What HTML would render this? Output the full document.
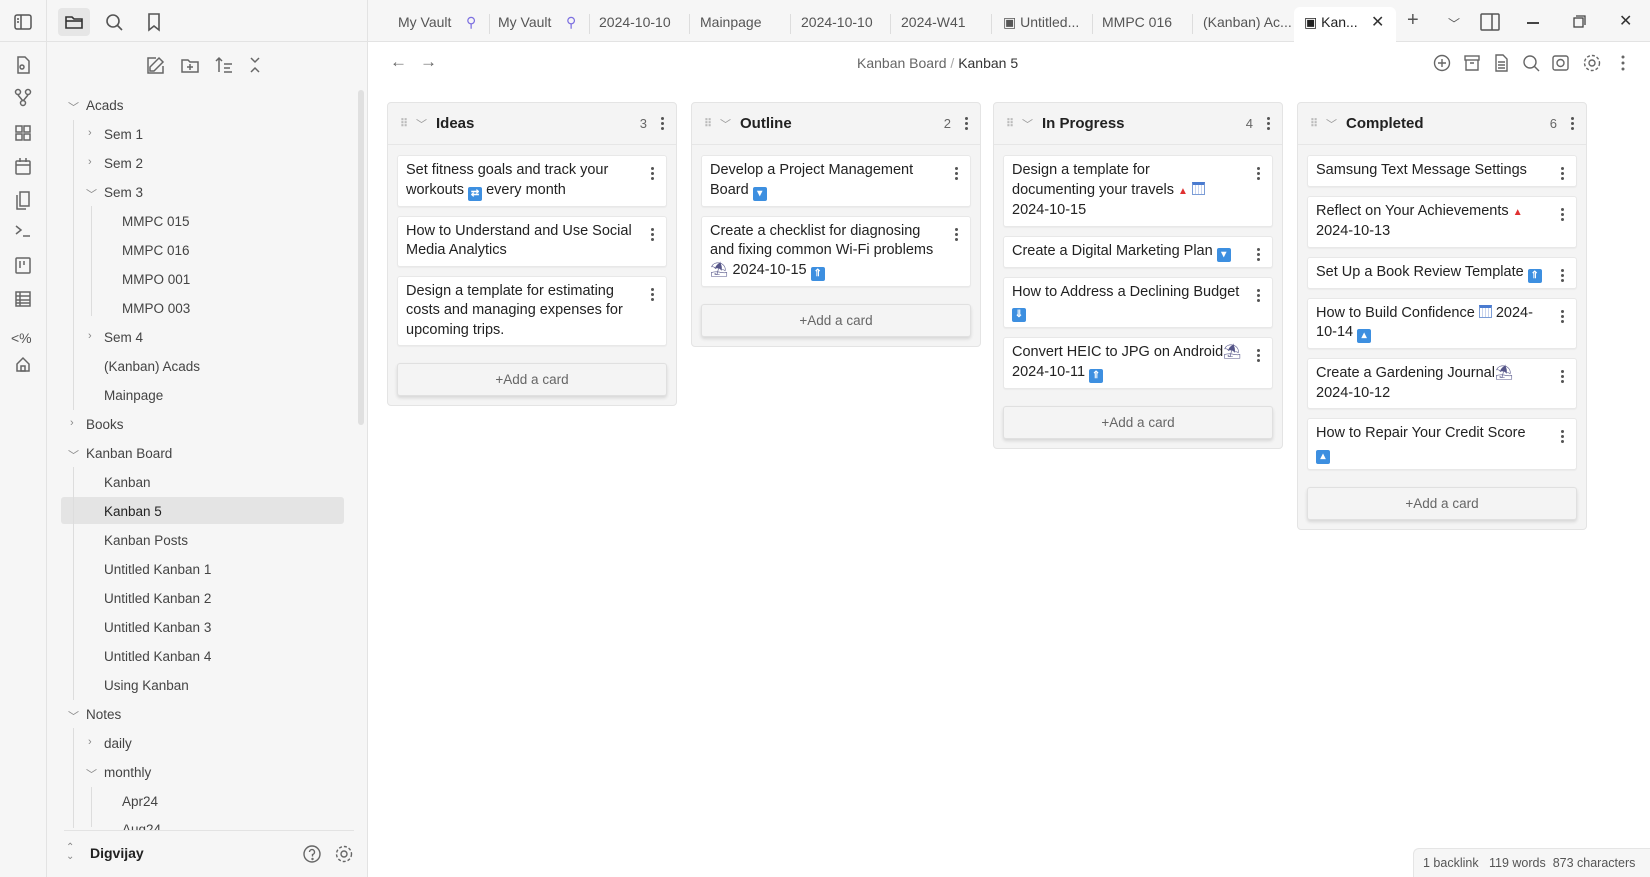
<!DOCTYPE html>
<html><head><meta charset="utf-8"><style>
*{box-sizing:border-box;margin:0;padding:0}
body{width:1650px;height:877px;overflow:hidden;font-family:"Liberation Sans",sans-serif;color:#222;background:#fff;position:relative}
.abs{position:absolute}
#ribbon{left:0;top:0;width:47px;height:877px;background:#f6f6f6;border-right:1px solid #e3e3e3}
#side{left:47px;top:0;width:321px;height:877px;background:#f6f6f6;border-right:1px solid #e3e3e3}
#topbar{left:368px;top:0;width:1282px;height:42px;background:#f6f6f6;border-bottom:1px solid #e3e3e3}
.sidetop{left:0;top:0;width:368px;height:42px;border-bottom:1px solid #e3e3e3}
.tab{position:absolute;top:14px;font-size:14px;color:#555;white-space:nowrap}
.sep{position:absolute;top:14px;width:1px;height:20px;background:#ddd}
.tree{position:absolute;font-size:13.5px;color:#444;white-space:nowrap}
.chev{position:absolute;font-size:11px;color:#888}
.col{position:absolute;top:102px;width:290px;background:#f4f4f4;border:1px solid #e4e4e4;border-radius:4px;padding:0 9px 9px}
.hd{height:42px;display:flex;align-items:center;font-size:15px;font-weight:bold;color:#222;border-bottom:1px solid #e6e6e6;margin:0 -9px 10px;padding:0 12px}
.hd .drag{color:#bbb;font-size:11px;width:16px}
.hd .cv{color:#999;font-size:11px;width:20px;font-weight:normal}
.hd .n{margin-left:auto;font-weight:normal;color:#666;font-size:13px;margin-right:14px}
.dots{width:3px;display:flex;flex-direction:column;gap:2px}
.dots i{width:3px;height:3px;background:#555;border-radius:50%;display:block}
.card{background:#fff;border:1px solid #e8e8e8;border-radius:3px;margin-bottom:9px;padding:5px 30px 5px 8px;font-size:14.5px;line-height:19.5px;position:relative;box-shadow:0 1px 1px rgba(0,0,0,.04)}
.card .dots{position:absolute;right:12px;top:11px}
.add{height:33px;margin-top:17px;background:#f4f4f4;border:1px solid #e0e0e0;border-radius:3px;box-shadow:0 2px 3px rgba(0,0,0,.12);text-align:center;line-height:31px;font-size:13.5px;color:#666}
.ic{display:inline-block;width:14px;height:14px;background:#3d8fe0;border-radius:2px;color:#fff;font-size:10px;line-height:14px;text-align:center;vertical-align:-2px;font-weight:bold}
.tri{color:#e03131;font-size:10px}
.cal{display:inline-block;width:13px;height:13px;border:1px solid #7a9cd6;border-top:3px solid #4a7bd0;vertical-align:-1px;background:repeating-linear-gradient(90deg,#fff 0 2px,#c8d4ee 2px 3px)}
</style></head><body>
<div id="ribbon" class="abs"></div>
<div id="side" class="abs"></div>
<div class="abs sidetop"></div>
<div id="topbar" class="abs"></div>

<svg class="abs" style="left:13px;top:12px" width="20" height="20" viewBox="0 0 20 20" fill="none" stroke="#555" stroke-width="1.5"><rect x="2" y="3" width="16" height="14" rx="2"/><line x1="8" y1="3" x2="8" y2="17"/><line x1="4" y1="7" x2="6" y2="7"/><line x1="4" y1="10" x2="6" y2="10"/></svg>
<div class="abs" style="left:58px;top:8px;width:32px;height:28px;background:#e6e6e6;border-radius:4px"></div>
<svg class="abs" style="left:64px;top:12px" width="20" height="20" viewBox="0 0 20 20" fill="none" stroke="#333" stroke-width="1.6"><path d="M2 5h6l2 2h8v9H2z"/><line x1="2" y1="9" x2="18" y2="9"/></svg>
<svg class="abs" style="left:104px;top:12px" width="20" height="20" viewBox="0 0 20 20" fill="none" stroke="#555" stroke-width="1.6"><circle cx="9" cy="9" r="6"/><line x1="13.5" y1="13.5" x2="18" y2="18"/></svg>
<svg class="abs" style="left:144px;top:12px" width="20" height="20" viewBox="0 0 20 20" fill="none" stroke="#555" stroke-width="1.6"><path d="M5 2h10v16l-5-4-5 4z"/></svg>

<svg class="abs" style="left:13px;top:55px" width="20" height="330" viewBox="0 0 20 330" fill="none" stroke="#666" stroke-width="1.5">
<path d="M5 2h7l4 4v12H5z"/><circle cx="9" cy="12" r="2"/>
<circle cx="5" cy="37" r="2.5"/><circle cx="15" cy="37" r="2.5"/><circle cx="10" cy="48" r="2.5"/><path d="M5 40l5 6M15 40l-5 6"/>
<rect x="3" y="71" width="6" height="6"/><rect x="11" y="71" width="6" height="6"/><rect x="3" y="79" width="6" height="6"/><rect x="11" y="79" width="6" height="6"/>
<rect x="3" y="106" width="14" height="13" rx="1"/><line x1="3" y1="110" x2="17" y2="110"/><line x1="7" y1="103" x2="7" y2="107"/><line x1="13" y1="103" x2="13" y2="107"/>
<path d="M7 137h9v14H7z"/><path d="M4 140v14h9"/>
<path d="M3 171l5 4-5 4"/><line x1="10" y1="181" x2="17" y2="181"/>
<rect x="3" y="203" width="14" height="15" rx="1"/><line x1="7" y1="206" x2="7" y2="213"/><line x1="11" y1="206" x2="11" y2="210"/>
<rect x="3" y="237" width="14" height="14"/><line x1="3" y1="241" x2="17" y2="241"/><line x1="3" y1="245" x2="17" y2="245"/><line x1="3" y1="248" x2="17" y2="248"/><line x1="7" y1="237" x2="7" y2="251"/>
<path d="M4 309l6-6 6 6v7H4z"/><rect x="8" y="311" width="4" height="5"/>
</svg>
<div class="abs" style="left:11px;top:330px;font-size:14px;color:#555">&lt;%</div>

<svg class="abs" style="left:146px;top:55px" width="120" height="20" viewBox="0 0 120 20" fill="none" stroke="#666" stroke-width="1.5">
<path d="M13 3l4 4-9 9H4v-4z"/><path d="M10 3H2v15h15v-7"/>
<path d="M36 5h6l2 2h8v10H36z"/><line x1="44" y1="9" x2="44" y2="15"/><line x1="41" y1="12" x2="47" y2="12"/>
<path d="M73 3v14M70 6l3-3 3 3"/><line x1="78" y1="9" x2="86" y2="9"/><line x1="78" y1="13" x2="84" y2="13"/><line x1="78" y1="17" x2="86" y2="17"/>
<path d="M105 3l4 4 4-4M105 17l4-4 4 4"/>
</svg>

<div class="abs" style="left:61px;top:497px;width:283px;height:27px;background:#e4e4e4;border-radius:3px"></div>
<div class="abs" style="left:73px;top:120px;width:1px;height:290px;background:#ddd"></div>
<div class="abs" style="left:91px;top:206px;width:1px;height:110px;background:#ddd"></div>
<div class="abs" style="left:73px;top:467px;width:1px;height:233px;background:#ddd"></div>
<div class="abs" style="left:73px;top:728px;width:1px;height:100px;background:#ddd"></div>
<div class="abs" style="left:91px;top:787px;width:1px;height:40px;background:#ddd"></div>
<span class="chev" style="left:68px;top:99px">﹀</span><div class="tree" style="left:86px;top:98px">Acads</div>
<span class="chev" style="left:88px;top:127px">›</span><div class="tree" style="left:104px;top:127px">Sem 1</div>
<span class="chev" style="left:88px;top:156px">›</span><div class="tree" style="left:104px;top:156px">Sem 2</div>
<span class="chev" style="left:86px;top:186px">﹀</span><div class="tree" style="left:104px;top:185px">Sem 3</div>
<div class="tree" style="left:122px;top:214px">MMPC 015</div>
<div class="tree" style="left:122px;top:243px">MMPC 016</div>
<div class="tree" style="left:122px;top:272px">MMPO 001</div>
<div class="tree" style="left:122px;top:301px">MMPO 003</div>
<span class="chev" style="left:88px;top:330px">›</span><div class="tree" style="left:104px;top:330px">Sem 4</div>
<div class="tree" style="left:104px;top:359px">(Kanban) Acads</div>
<div class="tree" style="left:104px;top:388px">Mainpage</div>
<span class="chev" style="left:70px;top:417px">›</span><div class="tree" style="left:86px;top:417px">Books</div>
<span class="chev" style="left:68px;top:447px">﹀</span><div class="tree" style="left:86px;top:446px">Kanban Board</div>
<div class="tree" style="left:104px;top:475px">Kanban</div>
<div class="tree" style="left:104px;top:504px;color:#222">Kanban 5</div>
<div class="tree" style="left:104px;top:533px">Kanban Posts</div>
<div class="tree" style="left:104px;top:562px">Untitled Kanban 1</div>
<div class="tree" style="left:104px;top:591px">Untitled Kanban 2</div>
<div class="tree" style="left:104px;top:620px">Untitled Kanban 3</div>
<div class="tree" style="left:104px;top:649px">Untitled Kanban 4</div>
<div class="tree" style="left:104px;top:678px">Using Kanban</div>
<span class="chev" style="left:68px;top:708px">﹀</span><div class="tree" style="left:86px;top:707px">Notes</div>
<span class="chev" style="left:88px;top:736px">›</span><div class="tree" style="left:104px;top:736px">daily</div>
<span class="chev" style="left:86px;top:766px">﹀</span><div class="tree" style="left:104px;top:765px">monthly</div>
<div class="tree" style="left:122px;top:794px">Apr24</div>
<div class="tree" style="left:122px;top:822px;height:8px;overflow:hidden">Aug24</div>
<div class="abs" style="left:64px;top:830px;width:290px;height:47px;background:#f6f6f6;border-top:1px solid #e3e3e3"></div>
<div class="abs" style="left:66px;top:843px;font-size:10px;color:#888;line-height:9px">⌃<br>⌄</div>
<div class="abs" style="left:90px;top:845px;font-size:14px;font-weight:bold;color:#222">Digvijay</div>
<svg class="abs" style="left:302px;top:844px" width="52" height="20" viewBox="0 0 52 20" fill="none" stroke="#666" stroke-width="1.4"><circle cx="10" cy="10" r="8"/><path d="M7.5 8a2.5 2.5 0 1 1 3 2.5v2"/><circle cx="10.5" cy="15" r=".5"/><circle cx="42" cy="10" r="3"/><circle cx="42" cy="10" r="7.5" stroke-dasharray="3 2"/></svg>
<div class="abs" style="left:358px;top:90px;width:6px;height:335px;background:#e0e0e0;border-radius:3px"></div>

<div class="tab" style="left:398px">My Vault</div><span class="tab" style="left:466px;color:#7c6fe0">⚲</span>
<div class="sep" style="left:489px"></div>
<div class="tab" style="left:498px">My Vault</div><span class="tab" style="left:566px;color:#7c6fe0">⚲</span>
<div class="sep" style="left:589px"></div>
<div class="tab" style="left:599px">2024-10-10</div>
<div class="sep" style="left:689px"></div>
<div class="tab" style="left:700px">Mainpage</div>
<div class="sep" style="left:790px"></div>
<div class="tab" style="left:801px">2024-10-10</div>
<div class="sep" style="left:890px"></div>
<div class="tab" style="left:901px">2024-W41</div>
<div class="sep" style="left:991px"></div>
<div class="tab" style="left:1003px">▣ Untitled...</div>
<div class="sep" style="left:1092px"></div>
<div class="tab" style="left:1102px">MMPC 016</div>
<div class="sep" style="left:1192px"></div>
<div class="tab" style="left:1203px">(Kanban) Ac...</div>
<div class="abs" style="left:1294px;top:7px;width:102px;height:36px;background:#fff;border-radius:6px 6px 0 0"></div>
<div class="tab" style="left:1304px;color:#222">▣ Kan...</div>
<div class="tab" style="left:1371px;color:#333;font-size:16px;top:12px">✕</div>
<div class="tab" style="left:1407px;font-size:20px;top:9px">+</div>
<div class="tab" style="left:1448px;font-size:12px;top:15px">﹀</div>
<svg class="abs" style="left:1480px;top:13px" width="20" height="18" viewBox="0 0 20 18" fill="none" stroke="#555" stroke-width="1.5"><rect x="1" y="1" width="18" height="16" rx="1"/><line x1="12" y1="1" x2="12" y2="17"/></svg>
<div class="abs" style="left:1527px;top:22px;width:12px;height:1.5px;background:#444"></div>
<svg class="abs" style="left:1573px;top:15px" width="13" height="13" viewBox="0 0 13 13" fill="none" stroke="#444" stroke-width="1.3"><rect x="1" y="3" width="9" height="9"/><path d="M3 1h9v9"/></svg>
<div class="tab" style="left:1619px;color:#333;font-size:16px;top:11px">✕</div>

<div class="abs" style="left:390px;top:52px;font-size:17px;color:#666">←</div>
<div class="abs" style="left:420px;top:52px;font-size:17px;color:#666">→</div>
<div class="abs" style="left:857px;top:55px;font-size:14px;color:#666">Kanban Board <span style="color:#aaa">/</span> <span style="color:#333">Kanban 5</span></div>
<svg class="abs" style="left:1433px;top:53px" width="200" height="20" viewBox="0 0 200 20" fill="none" stroke="#666" stroke-width="1.4">
<circle cx="9" cy="10" r="7.5"/><path d="M9 6v8M5 10h8"/>
<rect x="32" y="3" width="14" height="4"/><path d="M33 7v10h12V7M37 10h4"/>
<path d="M63 2h7l4 4v12H63z"/><path d="M65 9h7M65 12h7M65 15h7"/>
<circle cx="97" cy="9" r="6"/><path d="M101 13l5 5"/>
<rect x="120" y="3" width="15" height="14" rx="2"/><circle cx="127.5" cy="10" r="3.5"/>
<circle cx="159" cy="10" r="3"/><circle cx="159" cy="10" r="7.5" stroke-dasharray="3 2"/>
<circle cx="190" cy="4" r=".8" fill="#666"/><circle cx="190" cy="10" r=".8" fill="#666"/><circle cx="190" cy="16" r=".8" fill="#666"/>
</svg>

<div class="col" style="left:387px">
 <div class="hd"><span class="drag">⠿</span><span class="cv">﹀</span>Ideas<span class="n">3</span><span class="dots"><i></i><i></i><i></i></span></div>
 <div class="card">Set fitness goals and track your workouts <span class="ic">⇄</span> every month<span class="dots"><i></i><i></i><i></i></span></div>
 <div class="card">How to Understand and Use Social Media Analytics<span class="dots"><i></i><i></i><i></i></span></div>
 <div class="card">Design a template for estimating costs and managing expenses for upcoming trips.<span class="dots"><i></i><i></i><i></i></span></div>
 <div class="add">+Add a card</div>
</div>
<div class="col" style="left:691px">
 <div class="hd"><span class="drag">⠿</span><span class="cv">﹀</span>Outline<span class="n">2</span><span class="dots"><i></i><i></i><i></i></span></div>
 <div class="card">Develop a Project Management Board <span class="ic">▾</span><span class="dots"><i></i><i></i><i></i></span></div>
 <div class="card">Create a checklist for diagnosing and fixing common Wi-Fi problems <span style="color:#558">⛱</span> 2024-10-15 <span class="ic">⇑</span><span class="dots"><i></i><i></i><i></i></span></div>
 <div class="add">+Add a card</div>
</div>
<div class="col" style="left:993px">
 <div class="hd"><span class="drag">⠿</span><span class="cv">﹀</span>In Progress<span class="n">4</span><span class="dots"><i></i><i></i><i></i></span></div>
 <div class="card">Design a template for<br>documenting your travels <span class="tri">▲</span> <span class="cal"></span><br>2024-10-15<span class="dots"><i></i><i></i><i></i></span></div>
 <div class="card">Create a Digital Marketing Plan <span class="ic">▾</span><span class="dots"><i></i><i></i><i></i></span></div>
 <div class="card">How to Address a Declining Budget<br><span class="ic">⇓</span><span class="dots"><i></i><i></i><i></i></span></div>
 <div class="card">Convert HEIC to JPG on Android<span style="color:#558">⛱</span><br>2024-10-11 <span class="ic">⇑</span><span class="dots"><i></i><i></i><i></i></span></div>
 <div class="add">+Add a card</div>
</div>
<div class="col" style="left:1297px">
 <div class="hd"><span class="drag">⠿</span><span class="cv">﹀</span>Completed<span class="n">6</span><span class="dots"><i></i><i></i><i></i></span></div>
 <div class="card">Samsung Text Message Settings<span class="dots"><i></i><i></i><i></i></span></div>
 <div class="card">Reflect on Your Achievements <span class="tri">▲</span><br>2024-10-13<span class="dots"><i></i><i></i><i></i></span></div>
 <div class="card">Set Up a Book Review Template <span class="ic">⇑</span><span class="dots"><i></i><i></i><i></i></span></div>
 <div class="card">How to Build Confidence <span class="cal"></span> 2024-<br>10-14 <span class="ic">▴</span><span class="dots"><i></i><i></i><i></i></span></div>
 <div class="card">Create a Gardening Journal<span style="color:#558">⛱</span><br>2024-10-12<span class="dots"><i></i><i></i><i></i></span></div>
 <div class="card">How to Repair Your Credit Score<br><span class="ic">▴</span><span class="dots"><i></i><i></i><i></i></span></div>
 <div class="add">+Add a card</div>
</div>

<div class="abs" style="left:1413px;top:848px;width:237px;height:29px;background:#f6f6f6;border-top:1px solid #e5e5e5;border-left:1px solid #e5e5e5;border-radius:6px 0 0 0;font-size:12.5px;color:#555;line-height:28px;padding-left:9px;white-space:nowrap">1 backlink &nbsp; 119 words &nbsp;873 characters</div>
</body></html>
